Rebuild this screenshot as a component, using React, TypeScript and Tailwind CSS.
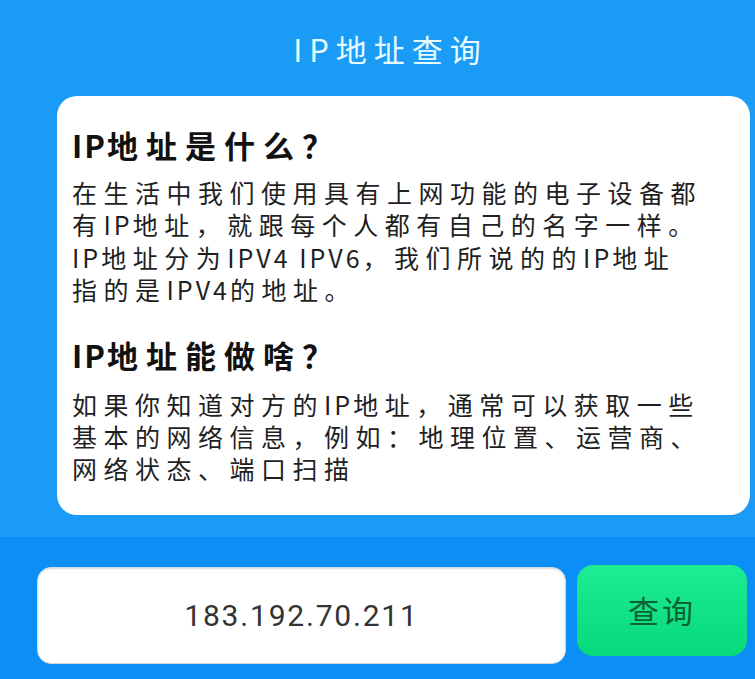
import type { ReactNode } from 'react'

// latin runs inside the chinese copy sit tighter than the CJK glyphs
function L({ children }: { children: ReactNode }) {
  return <span className="tracking-[3px]">{children}</span>
}

export default function App() {
  const font = { fontFamily: '"Noto Sans CJK SC", "Noto Sans", sans-serif' }

  return (
    <div className="w-[755px] h-[679px] overflow-hidden flex flex-col" style={font}>
      <div className="bg-[#1a9bf6] pb-[22px]">
        <div className="h-[96px] flex items-center justify-center pl-[26px]">
          <h1 className="text-[31px] leading-none tracking-[7px] text-[#e6fbff]">IP地址查询</h1>
        </div>
        <div className="ml-[57px] mr-[5px] bg-white rounded-[20px] h-[419px] pl-[15px] pt-[31px] text-[#1f1f1f]">
          <h2 className="text-[31px] leading-[36px] font-bold tracking-[8px] text-[#111]">
            <span className="tracking-[2px]">IP</span>地址是什么？
          </h2>
          <p className="mt-[13px] text-[25px] leading-[32.3px] tracking-[6.5px] whitespace-nowrap">
            在生活中我们使用具有上网功能的电子设备都
            <br />
            有<L>IP</L>地址，就跟每个人都有自己的名字一样。
            <br />
            <L>IP</L>地址分为<L>IPV4 IPV6</L>，我们所说的的<L>IP</L>地址
            <br />
            指的是<L>IPV4</L>的地址。
          </p>
          <h2 className="mt-[32px] text-[31px] leading-[36px] font-bold tracking-[8px] text-[#111]">
            <span className="tracking-[2px]">IP</span>地址能做啥？
          </h2>
          <p className="mt-[15px] text-[25px] leading-[32px] tracking-[6.5px] whitespace-nowrap">
            如果你知道对方的<L>IP</L>地址，通常可以获取一些
            <br />
            基本的网络信息，例如：地理位置、运营商、
            <br />
            网络状态、端口扫描
          </p>
        </div>
      </div>
      <div className="flex-1 bg-[#0b8ef5] pt-[28px] pl-[37px] pr-[8px] flex items-start gap-[11px]">
        <div className="mt-[2px] w-[529px] h-[97px] bg-white rounded-[14px] border border-[#d3d9df] shadow-[inset_0_1px_2px_rgba(0,0,0,0.15)] flex items-center justify-center">
          <span className="text-[30px] tracking-[1.8px] text-[#333]" style={{ fontFamily: 'Roboto, "Noto Sans", sans-serif' }}>
            183.192.70.211
          </span>
        </div>
        <button className="w-[170px] h-[91px] rounded-[16px] bg-gradient-to-b from-[#1cec93] to-[#06d97b] flex items-center justify-center">
          <span className="text-[31px] tracking-[3px] text-[#0c6233]">查询</span>
        </button>
      </div>
    </div>
  )
}
